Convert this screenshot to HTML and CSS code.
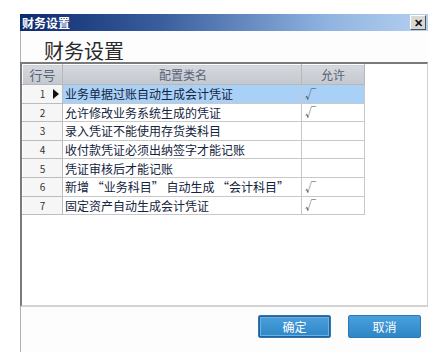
FILE: index.html
```html
<!DOCTYPE html>
<html lang="zh">

<head>
    <meta charset="UTF-8" />
    <title>财务设置</title>
    <link rel="stylesheet" href="styles.css">
</head>

<body>
    <div class="window">
        <div class="titlebar">
            <span class="title">财务设置</span>
            <span class="close">✕</span>
        </div>
        <div class="content">
            <div class="heading">财务设置</div>
            <div class="grid-box">
                <table class="grid">
                    <tr class="head">
                        <th class="c-no">行号</th>
                        <th class="c-name">配置类名</th>
                        <th class="c-ok">允许</th>
                    </tr>
                    <tr class="sel">
                        <td class="c-no">1<span class="arrow"></span></td>
                        <td class="c-name">业务单据过账自动生成会计凭证</td>
                        <td class="c-ok">√</td>
                    </tr>
                    <tr>
                        <td class="c-no">2</td>
                        <td class="c-name">允许修改业务系统生成的凭证</td>
                        <td class="c-ok">√</td>
                    </tr>
                    <tr>
                        <td class="c-no">3</td>
                        <td class="c-name">录入凭证不能使用存货类科目</td>
                        <td class="c-ok"></td>
                    </tr>
                    <tr>
                        <td class="c-no">4</td>
                        <td class="c-name">收付款凭证必须出纳签字才能记账</td>
                        <td class="c-ok"></td>
                    </tr>
                    <tr>
                        <td class="c-no">5</td>
                        <td class="c-name">凭证审核后才能记账</td>
                        <td class="c-ok"></td>
                    </tr>
                    <tr>
                        <td class="c-no">6</td>
                        <td class="c-name">新增 “业务科目” 自动生成 “会计科目”</td>
                        <td class="c-ok">√</td>
                    </tr>
                    <tr>
                        <td class="c-no">7</td>
                        <td class="c-name">固定资产自动生成会计凭证</td>
                        <td class="c-ok">√</td>
                    </tr>
                </table>
            </div>
            <div class="buttons">
                <button class="btn focus">确定</button>
                <button class="btn">取消</button>
            </div>
        </div>
    </div>
</body>

</html>
```

FILE: styles.css
```css
body {
    margin: 0;
    background: #ffffff;
    font-family: "Noto Sans CJK SC", "Liberation Sans", sans-serif;
}

.window {
    margin: 14px 0 0 20px;
    width: 408px;
}

.titlebar {
    display: flex;
    justify-content: space-between;
    align-items: center;
    height: 17px;
    background: linear-gradient(90deg, #0c2a6e 0%, #3a5f9e 35%, #8fb3e0 75%, #b4d0f0 100%);
}

.title {
    color: #ffffff;
    font-size: 12px;
    font-weight: bold;
    padding-left: 2px;
    line-height: 17px;
}

.close {
    width: 14px;
    height: 13px;
    margin-right: 2px;
    background: #d8d8d4;
    border: 1px solid #ffffff;
    border-right-color: #555;
    border-bottom-color: #555;
    font-size: 11px;
    font-weight: bold;
    color: #111;
    text-align: center;
    line-height: 13px;
}

.content {
    background: #fdfdfd;
    border-left: 1px solid #b0b0b0;
    height: 321px;
}

.heading {
    font-size: 20px;
    color: #2a2a2a;
    padding: 8px 0 0 23px;
    height: 23px;
    line-height: 23px;
}

.grid-box {
    height: 241px;
    border-top: 2px solid #7a7a7a;
    border-left: 2px solid #7a7a7a;
    border-right: 1px solid #d0d0d0;
    border-bottom: 2px solid #d4d4d4;
    margin-left: -1px;
    background: #ffffff;
}

.grid {
    border-collapse: collapse;
    font-size: 12px;
    color: #14243c;
}

.grid th,
.grid td {
    border: 1px solid #c8c8c8;
    padding: 0;
    white-space: nowrap;
}

.grid .head th {
    height: 18px;
    background: linear-gradient(#d6d9de, #c3c7cf);
    color: #5a6478;
    font-weight: normal;
    font-size: 12px;
    border-color: #ffffff #b8b8b8 #b8b8b8 #ffffff;
}

.grid .head th.c-no {
    font-size: 13px;
}

.grid td {
    height: 17.6px;
}

.c-no {
    width: 39px;
    text-align: center;
}

.grid td.c-no {
    position: relative;
    background: #f6f6f6;
    font-size: 10px;
    color: #333;
    border-color: #ffffff #bcbcbc #bcbcbc #ffffff;
}

.c-name {
    width: 236px;
    padding-left: 2px !important;
}

.grid th.c-name {
    text-align: center;
}

.c-ok {
    width: 59px;
    padding-left: 3px !important;
    font-size: 11px;
    color: #444;
}

.grid th.c-ok {
    text-align: center;
    padding-left: 0 !important;
}

.sel .c-name,
.sel .c-ok {
    background: #a9d1f7;
}

.arrow {
    position: absolute;
    right: 3px;
    top: 4px;
    border-left: 6px solid #111;
    border-top: 5px solid transparent;
    border-bottom: 5px solid transparent;
}

.buttons {
    display: flex;
    justify-content: flex-end;
    gap: 17px;
    padding: 8px 7px 0 0;
}

.btn {
    width: 73px;
    height: 23px;
    border: 1px solid #2a78b8;
    border-radius: 2px;
    background: linear-gradient(#4aa0dc, #2f86c6);
    color: #ffffff;
    font-family: "Noto Sans CJK SC", sans-serif;
    font-size: 12px;
    padding: 0;
}

.btn.focus {
    box-shadow: inset 0 0 0 1px #2c5f8c, inset 0 0 0 2px #6ab0e4;
}
```
